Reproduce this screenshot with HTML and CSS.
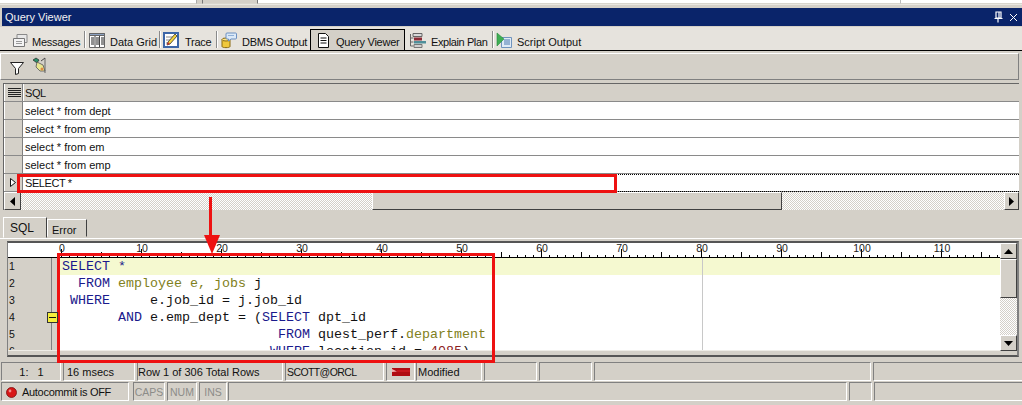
FILE: index.html
```html
<!DOCTYPE html>
<html lang="en">
<head>
<meta charset="utf-8">
<title>Query Viewer</title>
<link rel="stylesheet" href="styles.css">
</head>
<body>
<div class="page">
  <div class="topstrip">
    <div class="ts a"></div><div class="ts b"></div><div class="ts c"></div><div class="ts d"></div>
  </div>
  <div class="titlebar">
    <span class="title">Query Viewer</span>
    <span class="winbtns">
      <svg width="9" height="12" viewBox="0 0 9 12"><path d="M2 1h5v6H2zM5 1v6M0.500 7.500h8M4 8v3.500" fill="none" stroke="#fff" stroke-width="1.200"/></svg>
      <svg width="9" height="9" viewBox="0 0 9 9"><path d="M1 1l7 7M8 1L1 8" stroke="#fff" stroke-width="1"/></svg>
    </span>
  </div>
  <div class="tabbar">
    <div class="tab t1">
      <svg class="ic" width="17" height="15" viewBox="0 0 17 15"><path d="M5 1.500h10v8H5z" fill="#e8e8e8" stroke="#8a8a8a"/><path d="M1.500 5.500h11v8h-11z" fill="#f4f4f4" stroke="#777"/><path d="M4 8.500h6M4 10.500h6" stroke="#999"/></svg>
      <span>Messages</span></div>
    <i class="sep"></i>
    <div class="tab t2">
      <svg class="ic" width="16" height="15" viewBox="0 0 16 15"><path d="M.5.500h15v14H.5z" fill="#fff" stroke="#666"/><path d="M.5.500h15v2H.5z" fill="#8aa0c0" stroke="#666"/><path d="M6 3v11M10.500 3v11" stroke="#444"/><path d="M7 5h3M7 7h3M7 9h3M7 11h3M2 5h3M2 7h3M2 9h3M2 11h3M12 5h3M12 7h3M12 9h3M12 11h3" stroke="#222"/></svg>
      <span>Data Grid</span></div>
    <i class="sep"></i>
    <div class="tab t3">
      <svg class="ic" width="16" height="16" viewBox="0 0 16 16"><path d="M1 1h14v14H1z" fill="#fff" stroke="#3c66a8" stroke-width="2"/><path d="M3 5h7M3 8h5M3 11h3" stroke="#888"/><path d="M4 13l1-3 7-8 2 2-7 8z" fill="#f3d23a" stroke="#333" stroke-width=".8"/><path d="M4 13l1-3 2 2z" fill="#c33"/></svg>
      <span>Trace</span></div>
    <i class="sep"></i>
    <div class="tab t4">
      <svg class="ic" width="16" height="17" viewBox="0 0 16 17"><path d="M1 7.500v7c0 1.500 8 1.500 8 0v-7z" fill="#f0c83c" stroke="#8a6a10"/><ellipse cx="5" cy="7.500" rx="4" ry="1.500" fill="#fbe58a" stroke="#8a6a10"/><path d="M6 1h8.500a1 1 0 0 1 1 1v4a1 1 0 0 1-1 1H10l-2.500 2V7H6a1 1 0 0 1-1-1V2a1 1 0 0 1 1-1z" fill="#dbe9f7" stroke="#6b8fc0"/><path d="M7 3.500h6" stroke="#8fb0d8"/></svg>
      <span>DBMS Output</span></div>
    <div class="tab active t5">
      <svg class="ic" width="13" height="15" viewBox="0 0 13 15"><path d="M1.500.500h7l3 3v11h-10z" fill="#fff" stroke="#111"/><path d="M3.500 5h6M3.500 7.500h6M3.500 10h6" stroke="#111"/></svg>
      <span>Query Viewer</span></div>
    <div class="tab t6">
      <svg class="ic" width="17" height="15" viewBox="0 0 17 15"><path d="M1.500 1v12h3M1.500 5h3M1.500 9h3" fill="none" stroke="#666"/><path d="M4 .500h9v3H4z" fill="#d9d9d9" stroke="#666"/><path d="M5 4.500h8v3H5z" fill="#8c2a36"/><path d="M5 8h12v2.500H5z" fill="#4f8f9a"/><path d="M5 11.500h8v3H5z" fill="#d0d0d0" stroke="#777"/></svg>
      <span>Explain Plan</span></div>
    <i class="sep"></i>
    <div class="tab t7">
      <svg class="ic" width="17" height="17" viewBox="0 0 17 17"><path d="M5.500 5.500h10v10h-10z" fill="#dfeaf6" stroke="#6f93bd"/><path d="M8 8h6M8 10h6M8 12h6" stroke="#4a78b0"/><path d="M1 1l7 6-7 7z" fill="#3fae54" stroke="#2a8a3d" stroke-width=".6"/></svg>
      <span>Script Output</span></div>
  </div>
  <div class="toolbar">
    <svg class="tool" width="14" height="13" viewBox="0 0 14 13"><path d="M.5.500h13L8.500 6.500v5l-3 1v-6z" fill="#fff" stroke="#222"/></svg>
    <svg class="tool2" width="17" height="17" viewBox="0 0 17 17"><path d="M1 3l3-2 3 2-2 3z" fill="#2e8f6a" stroke="#111" stroke-width=".6"/><path d="M5 5l6 3 2 6-5 0-4-4z" fill="#e8e690" stroke="#555" stroke-width=".8"/><path d="M13 1v15" stroke="#666"/><path d="M9 4l4-3" stroke="#444"/><circle cx="10" cy="12" r="1.500" fill="#d84"/></svg>
  </div>
  <div class="grid">
    <div class="row head"><div class="ind"><svg width="14" height="10" viewBox="0 0 14 10"><path d="M1 .500h13M1 2.500h13M1 4.500h13M1 6.500h13M1 8.500h13" stroke="#222"/></svg></div><div class="cell">SQL</div></div>
    <div class="row"><div class="ind"></div><div class="cell">select * from dept</div></div>
    <div class="row"><div class="ind"></div><div class="cell">select * from emp</div></div>
    <div class="row"><div class="ind"></div><div class="cell">select * from em</div></div>
    <div class="row"><div class="ind"></div><div class="cell">select * from emp</div></div>
    <div class="row sel"><div class="ind"><svg width="7" height="9" viewBox="0 0 7 9"><path d="M.5.500l5 4-5 4z" fill="#fff" stroke="#111"/></svg></div><div class="cell">SELECT *</div></div>
    <div class="hscroll">
      <div class="sbtn wide"><svg width="5" height="9" viewBox="0 0 5 9"><path d="M5 0v9L0 4.500z" fill="#000"/></svg></div>
      <div class="track t-a"></div>
      <div class="thumb"></div>
      <div class="track t-b"></div>
      <div class="sbtn"><svg width="5" height="9" viewBox="0 0 5 9"><path d="M0 0v9l5-4.500z" fill="#000"/></svg></div>
    </div>
  </div>
  <div class="lowertabs">
    <div class="ltab on">SQL</div>
    <div class="ltab">Error</div>
  </div>
  <div class="editor">
    <div class="edmain">
      <div class="ruler">
        <span>0</span><span>10</span><span>20</span><span>30</span><span>40</span><span>50</span><span>60</span><span>70</span><span>80</span><span>90</span><span>100</span><span>110</span>
      </div>
      <div class="edbody">
        <div class="gutter">
          <div class="ln">1</div><div class="ln">2</div><div class="ln">3</div><div class="ln fold">4<b class="foldbox"></b></div><div class="ln">5</div><div class="ln">6</div>
        </div>
        <div class="code">
          <i class="margin"></i>
          <pre class="cl cur"><span class="k">SELECT *</span></pre>
          <pre class="cl"><span class="k">  FROM </span><span class="o">employee e, jobs</span> j</pre>
          <pre class="cl"><span class="k"> WHERE</span>     e.job_id = j.job_id</pre>
          <pre class="cl">       <span class="k">AND</span> e.emp_dept = (<span class="k">SELECT</span> dpt_id</pre>
          <pre class="cl">                           <span class="k">FROM</span> quest_perf.<span class="o">department</span></pre>
          <pre class="cl">                          <span class="k">WHERE</span> location_id = <span class="n">4085</span>)</pre>
        </div>
      </div>
    </div>
    <div class="vscroll">
      <div class="vbtn"><svg width="9" height="5" viewBox="0 0 9 5"><path d="M0 5h9L4.500 0z" fill="#000"/></svg></div>
      <div class="vthumb"></div>
      <div class="vtrack"></div>
      <div class="vbtn"><svg width="9" height="5" viewBox="0 0 9 5"><path d="M0 0h9L4.500 5z" fill="#000"/></svg></div>
    </div>
  </div>
  <div class="status s1">
    <div class="sc w1 ctr">1:&nbsp;&nbsp;&nbsp;1</div>
    <div class="sc w2">16 msecs</div>
    <div class="sc w3">Row 1 of 306 Total Rows</div>
    <div class="sc w4">SCOTT@ORCL</div>
    <div class="sc w5"><svg width="18" height="8" viewBox="0 0 18 8"><path d="M0 0h18v8H0z" fill="#b00c12"/><path d="M0 1l5 2.500L0 4z" fill="#f3b0b0"/><path d="M5 3h13" stroke="#e02028"/></svg></div>
    <div class="sc w6">Modified</div>
    <div class="sc w7"></div>
    <div class="sc w7"></div>
    <div class="sc w9"></div>
    <div class="sc w10"></div>
  </div>
  <div class="status s2">
    <div class="sc x1"><svg width="11" height="11" viewBox="0 0 11 11"><circle cx="5.500" cy="5.500" r="5" fill="#d81818" stroke="#7a0c0c" stroke-width=".8"/><circle cx="4" cy="4" r="1.400" fill="#f48a8a"/></svg>Autocommit is OFF</div>
    <div class="sc x2 dim">CAPS</div>
    <div class="sc x3 dim">NUM</div>
    <div class="sc x4 dim">INS</div>
    <div class="sc x5"></div>
    <div class="sc x6"></div>
    <div class="sc x7"></div>
  </div>
  <div class="callout box-a"></div>
  <div class="callout box-b"></div>
  <div class="shaft"></div>
  <div class="head-arrow"></div>
</div>
</body>
</html>
```
FILE: styles.css
```css
* { box-sizing: border-box; }
html, body { margin: 0; padding: 0; }
body { background: #d4d0c8; overflow: hidden; }
.page {
  position: relative;
  width: 1022px;
  height: 405px;
  overflow: hidden;
  background: #d4d0c8;
  font: 11px/1 "Liberation Sans", Arial, sans-serif;
  color: #111;
}
svg { display: block; flex: none; }

/* top strip */
.topstrip { display: flex; height: 5px; border-bottom: 1px solid #e8e6e0; }
.ts { height: 4px; background: #fff; border-bottom: 1px solid #d8d5cd; }
.ts.a { width: 197px; border-right: 1px solid #aaa; }
.ts.b { width: 56px; background: #d4d0c8; border-left: 1px solid #777; border-right: 1px solid #777; margin-left: 5px; }
.ts.c { width: 642px; }
.ts.d { flex: 1; border-left: 1px solid #bbb; }

/* title */
.titlebar {
  display: flex; align-items: center; justify-content: space-between;
  height: 18px; margin: 3px 0 0 2px; padding: 0 4px 0 3px;
  background: #0a246a; color: #f2f2f2;
}
.winbtns { display: flex; align-items: center; gap: 6px; }

/* tabs */
.tabbar {
  display: flex; align-items: flex-end;
  height: 24px; margin-top: 1px; padding-left: 12px;
  background: #e6e3dd; border-bottom: 1px solid #000;
}
.tab { display: flex; align-items: center; height: 20px; white-space: nowrap; }
.tab span { padding-top: 5px; letter-spacing: -0.25px; }
.t2 span, .t7 span { letter-spacing: 0; }
.t6 span { letter-spacing: -0.4px; }
.t1 { width: 72px; gap: 3px; }
.t2 { width: 70px; gap: 5px; margin-left: 3px; }
.t3 { width: 53px; gap: 6px; margin-left: 2px; }
.t4 { width: 88px; gap: 5px; margin-left: 3px; }
.t5 { width: 95px; gap: 6px; padding-left: 6px; }
.t6 { width: 83px; gap: 5px; margin-left: 4px; }
.t7 { gap: 4px; margin-left: 2px; }
.active { background: #d4d0c8; border: 1px solid #000; border-bottom: 0; height: 21px; margin-left: 1px; }
.sep { width: 1px; height: 17px; margin-bottom: 2px; background: #8a8a8a; border-right: 1px solid #fff; box-sizing: content-box; }

/* toolbar */
.toolbar {
  display: flex; align-items: center;
  height: 27px; margin: 2px 3px 0 0;
  padding-left: 9px;
  border: 1px solid; border-color: #fff #808080 #808080 #fff;
}
.tool { margin-top: 3px; }
.tool2 { margin: -2px 0 0 8px; }

/* grid */
.grid { margin: 3px 3px 0 3px; border-top: 1px solid #666; border-left: 1px solid #666; }
.row { display: flex; height: 18px; border-bottom: 1px solid #8a8a8a; background: #fff; }
.row.head { background: #d4d0c8; height: 18px; }
.ind {
  width: 19px; flex: none; display: flex; align-items: center; justify-content: center;
  background: #d4d0c8; border-right: 1px solid #808080; border-left: 1px solid #fff;
}
.cell { padding: 1px 0 0 1px; flex: 1; line-height: 16px; border-left: 1px solid #fff; }
.sel .cell { border-top: 1px dotted #000; border-bottom: 1px dotted #000; margin-bottom: -1px; line-height: 14px; letter-spacing: -0.4px; }
.head .cell { letter-spacing: -0.4px; }
.hscroll { display: flex; height: 18px; }
.sbtn {
  width: 15px; flex: none; display: flex; align-items: center; justify-content: center;
  background: #d4d0c8; border: 1px solid; border-color: #fff #404040 #404040 #fff;
}
.sbtn.wide { width: 17px; }
.track { background: repeating-conic-gradient(#fff 0 25%, #d4d0c8 0 50%) 0 0 / 2px 2px; }
.t-a { width: 351px; }
.t-b { flex: 1; }
.thumb { width: 410px; background: #d4d0c8; border: 1px solid; border-color: #fff #404040 #404040 #fff; }

/* lower tabs */
.lowertabs { display: flex; align-items: flex-end; height: 29px; padding-left: 3px; border-bottom: 1px solid #fff; }
.ltab {
  width: 40px; height: 18px; padding: 5px 0 0 4px; margin-bottom: 1px;
  border: 1px solid; border-color: #fff #404040 transparent #fff;
}
.ltab.on { width: 44px; height: 21px; padding: 4px 0 0 6px; margin-bottom: 0; border-right-color: #404040; font-size: 12px; }

/* editor */
.editor {
  display: flex; height: 116px; margin: 2px 3px 0 7px; padding-bottom: 4px;
  border: 2px solid; border-color: #555 #808080 #555 #808080; border-left-width: 1px; background: #d4d0c8;
}
.edmain { flex: 1; min-width: 0; display: flex; flex-direction: column; background: #fff; border-bottom: 1px solid #eeece6; }
.ruler {
  display: flex; flex: none; height: 15px; padding-left: 14px;
  font-size: 10.5px; line-height: 10px; color: #222;
  border-bottom: 1px solid #000;
  background:
    repeating-linear-gradient(90deg, #000 0 1px, transparent 1px 80px) 53px 100% / 100% 8px no-repeat,
    repeating-linear-gradient(90deg, #000 0 1px, transparent 1px 40px) 53px 100% / 100% 5px no-repeat,
    repeating-linear-gradient(90deg, #000 0 1px, transparent 1px 8px) 53px 100% / 100% 2px no-repeat,
    #fff;
}
.ruler span { width: 80px; flex: none; text-align: center; }
.edbody { flex: 1; display: flex; min-height: 0; overflow: hidden; }
.gutter { width: 52px; flex: none; background: #d4d0c8; padding-left: 1px; font-size: 10.5px; position: relative; overflow: hidden; }
.gutter::after { content: ""; position: absolute; top: 0; bottom: 0; left: 43px; width: 1px; background: #808080; }
.ln { height: 17px; line-height: 17px; position: relative; }
.foldbox {
  position: absolute; z-index: 1; left: 38px; top: 3px; width: 11px; height: 11px;
  background: linear-gradient(#111, #111) center / 7px 1px no-repeat, #f6ee3c; border: 1px solid #333;
}
.code { flex: 1; position: relative; background: #fff; overflow: hidden; }
.margin { position: absolute; z-index: 1; left: 642px; top: 0; bottom: 0; width: 1px; background: #c8c8c8; }
.cl { margin: 0; height: 17px; padding-left: 2px; font: 13.33px/17px "Liberation Mono", monospace; color: #111; }
.cur { background: #f5f9d0; }
.k { color: #1a1a8c; }
.o { color: #808020; }
.n { color: #8c2020; }

.vscroll { width: 17px; flex: none; display: flex; flex-direction: column; }
.vbtn {
  height: 16px; flex: none; display: flex; align-items: center; justify-content: center;
  background: #d4d0c8; border: 1px solid; border-color: #fff #404040 #404040 #fff;
}
.vthumb { height: 39px; flex: none; background: #d4d0c8; border: 1px solid; border-color: #fff #404040 #404040 #fff; }
.vtrack { flex: 1; background: repeating-conic-gradient(#fff 0 25%, #d4d0c8 0 50%) 0 0 / 2px 2px; }

/* status */
.status { display: flex; height: 19px; gap: 2px; padding-left: 1px; }
.s1 { margin-top: 5px; }
.s2 { margin-top: 1px; }
.sc {
  display: flex; align-items: center; gap: 5px; height: 19px; padding: 2px 0 0 1px; flex: none;
  border: 1px solid; border-color: #808080 #fff #fff #808080; white-space: nowrap;
}
.w1 { width: 60px; } .ctr { justify-content: center; }
.w2 { width: 72px; padding-left: 3px; } .w3 { width: 146px; padding-left: 0; } .w4 { width: 99px; font-size: 10.5px; letter-spacing: -0.6px; }
.w5 { width: 29px; justify-content: center; padding: 0; } .w6 { width: 66px; margin-left: -1px; }
.w7 { width: 53px; } .w9 { width: 277px; } .w10 { width: 151px; }
.x1 { width: 128px; padding-left: 4px; letter-spacing: -0.3px; } .x2 { width: 32px; margin-left: 2px; } .x3 { width: 30px; } .x4 { width: 28px; }
.x5 { width: 619px; margin-left: -1px; } .x6 { width: 23px; } .x7 { width: 151px; }
.dim { color: #8c8c88; justify-content: center; font-size: 10.5px; padding: 2px 0 0; }

/* annotations */
.callout { position: absolute; border: 3px solid #ee1111; }
.box-a { left: 17px; top: 174px; width: 600px; height: 19px; }
.box-b { left: 57px; top: 253px; width: 438px; height: 110px; }
.shaft { position: absolute; left: 209px; top: 197px; width: 3px; height: 44px; background: #ee1111; }
.head-arrow {
  position: absolute; left: 204px; top: 235px; width: 0; height: 0;
  border-left: 8px solid transparent; border-right: 8px solid transparent; border-top: 19px solid #ee1111;
}
```
